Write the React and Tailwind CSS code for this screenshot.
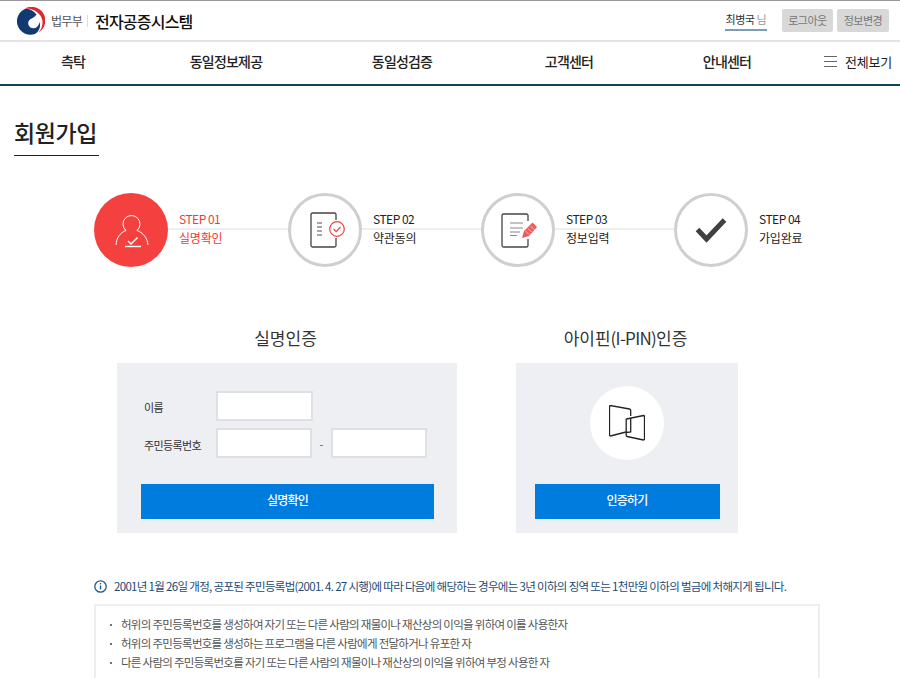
const navItems = [
  { label: '측탁', className: 'w-[146px]' },
  { label: '동일정보제공', className: 'w-[160px]' },
  { label: '동일성검증', className: 'w-[192px]' },
  { label: '고객센터', className: 'w-[142px]' },
  { label: '안내센터', className: 'w-[174px]' },
]

const steps = [
  { no: 'STEP 01', name: '실명확인', active: true, icon: <UserCheckIcon />, width: 'w-[194px]' },
  { no: 'STEP 02', name: '약관동의', icon: <AgreeIcon />, width: 'w-[193px]' },
  { no: 'STEP 03', name: '정보입력', icon: <WriteIcon />, width: 'w-[193px]' },
  { no: 'STEP 04', name: '가입완료', icon: <DoneIcon />, width: 'w-[130px]', last: true },
]

const notices = [
  '허위의 주민등록번호를 생성하여 자기 또는 다른 사람의 재물이나 재산상의 이익을 위하여 이를 사용한자',
  '허위의 주민등록번호를 생성하는 프로그램을 다른 사람에게 전달하거나 유포한 자',
  '다른 사람의 주민등록번호를 자기 또는 다른 사람의 재물이나 재산상의 이익을 위하여 부정 사용한 자',
]

function Emblem() {
  return (
    <svg width="28" height="28" viewBox="0 0 28 28" className="shrink-0">
      <circle cx="14" cy="14" r="14" fill="#fff" />
      <path d="M9 1.500A13.500 13.500 0 1 0 18 27C22.500 24 24 19 22.500 15 21.500 21 16.500 22.500 13.500 20.500 10.500 18.500 10.500 14.500 13 12.500 15 11 18 10.500 19.500 7.500 17 4 13.500 2 9 1.500Z" fill="#123a6e" />
      <path d="M7.500 1.700A13.700 13.700 0 0 1 21.500 25.500 15 15 0 0 0 25.300 13C24 6.500 16 0.800 7.500 1.700Z" fill="#e2252f" />
    </svg>
  )
}

function UserCheckIcon() {
  return (
    <svg width="40" height="40" viewBox="0 0 40 40" fill="none" stroke="#fff" strokeWidth="1">
      <path d="M15 20.500A8.500 8.500 0 1 1 26 20.500" />
      <path d="M15 20.500C9 22.500 5.500 28 5 35M26 20.500C32 22.500 36.500 28 37 35" />
      <path d="M17 31l3 3 6.500-6.500" strokeWidth="1.500" />
      <path d="M14 36.500h16" strokeWidth="1.400" />
    </svg>
  )
}

function AgreeIcon() {
  return (
    <svg width="36" height="36" viewBox="0 0 36 36" fill="none" className="overflow-visible">
      <path d="M29 8V2.500A1.500 1.500 0 0 0 27.500 1H5.500A1.500 1.500 0 0 0 4 2.500v31A1.500 1.500 0 0 0 5.500 35h22a1.500 1.500 0 0 0 1.500-1.500V26" stroke="#444" strokeWidth="1.300" />
      <path d="M10 11h5M10 15h5M10 19h5M10 23h5" stroke="#888" strokeWidth="1.300" />
      <circle cx="30" cy="17" r="7.300" fill="#fff" stroke="#f04040" strokeWidth="1.200" />
      <path d="M26.500 17l2.700 2.700 4.300-4.700" stroke="#f04040" strokeWidth="1.200" />
    </svg>
  )
}

function WriteIcon() {
  return (
    <svg width="36" height="36" viewBox="0 0 36 36" fill="none" className="overflow-visible">
      <path d="M28 9V3.500A1.500 1.500 0 0 0 26.500 2H3.500A1.500 1.500 0 0 0 2 3.500v30A1.500 1.500 0 0 0 3.500 35h23a1.500 1.500 0 0 0 1.500-1.500V27" stroke="#444" strokeWidth="1.300" />
      <path d="M10 11h13M10 16h13M10 20h10M10 23.500h7" stroke="#888" strokeWidth="1.200" />
      <path d="M22 26l2-7 8.500-8.500 4.500 4.500-8 9Z" fill="#f25a5a" />
      <path d="M25.500 19l3.500 3.500M28 16.500l3.500 3.500M30.500 14l3.500 3.500" stroke="#fff" strokeWidth="0.600" />
    </svg>
  )
}

function DoneIcon() {
  return (
    <svg width="32" height="26" viewBox="0 0 32 26" fill="none">
      <path d="M2.500 12.500l9 9.500L29.500 3" stroke="#404040" strokeWidth="5" />
    </svg>
  )
}

function PinIcon() {
  return (
    <svg width="36" height="36" viewBox="0 0 36 36" fill="none" stroke="#222" strokeWidth="1.300">
      <path d="M17 27l-15.500 4a1 1 0 0 1-1-1V1.500a1 1 0 0 1 1-1l19 3.500a1.500 1.500 0 0 1 1.200 1.500V11" />
      <path d="M17.500 14l17-3.500a1 1 0 0 1 1 1V34a1 1 0 0 1-1 1L18 31.500a1 1 0 0 1-0.800-1V15a1 1 0 0 1 0.300-1Z" />
      <path d="M21.700 13v14l-4.500 0.500" />
    </svg>
  )
}

function InfoIcon() {
  return (
    <svg width="13" height="13" viewBox="0 0 13 13" fill="none" stroke="#1d5c8c" className="shrink-0">
      <circle cx="6.500" cy="6.500" r="5.700" strokeWidth="1.300" />
      <path d="M6.500 5.500v4" strokeWidth="1.400" />
      <path d="M6.500 3v1.400" strokeWidth="1.400" />
    </svg>
  )
}

function Step({ no, name, active, icon, last, width }) {
  return (
    <div className={`flex items-center ${width}`}>
      <div className={`flex h-[74px] w-[74px] shrink-0 items-center justify-center rounded-full ${active ? 'bg-[#f54040]' : 'border-[3px] border-[#cfcfcf] bg-white'}`}>
        {icon}
      </div>
      <div className={`mb-[2px] flex min-w-0 flex-1 flex-col text-[12px] leading-[18px] ${active ? 'text-[#f03a3a]' : 'text-[#222]'}`}>
        <span className="pl-[11px] tracking-[-0.5px]">{no}</span>
        <span className={`h-[2px] ${last ? '' : 'bg-[#eeeeee]'}`} />
        <span className="-translate-y-px pl-[11px] tracking-[-0.2px]">{name}</span>
      </div>
    </div>
  )
}

export default function App() {
  return (
    <div className="h-[678px] w-[900px] overflow-hidden bg-white font-['Noto_Sans_CJK_KR','Noto_Sans',sans-serif] text-[#222]">
      <header className="flex h-[42px] items-center border-t border-b-2 border-t-[#999] border-b-[#e4e4e4] pl-[17px] pr-[11px]">
        <Emblem />
        <span className="ml-[6px] text-[12px] tracking-[-0.7px] text-[#555]">법무부</span>
        <span className="mx-[5px] h-[12px] w-px bg-[#ddd]" />
        <span className="ml-[2px] text-[16px] font-medium tracking-[-0.8px] text-[#111]">전자공증시스템</span>
        <div className="ml-auto flex items-center">
          <span className="border-b-2 border-[#7c9db8] px-[1px] pb-[1px] text-[11px] leading-[18px] tracking-[-0.5px] text-[#333]">
            최병국 <span className="text-[#999]">님</span>
          </span>
          <button className="ml-[15px] h-[23px] w-[51px] rounded-[2px] bg-[#d8d8d8] text-[11px] tracking-[-0.5px] text-[#777]">로그아웃</button>
          <button className="ml-[4px] h-[23px] w-[52px] rounded-[2px] bg-[#d8d8d8] text-[11px] tracking-[-0.5px] text-[#777]">정보변경</button>
        </div>
      </header>

      <nav className="flex h-[44px] items-center border-b-2 border-[#123f5f] pb-[3px]">
        {navItems.map((item) => (
          <a key={item.label} className={`${item.className} text-center text-[14px] font-medium tracking-[-0.8px] text-[#222]`}>
            {item.label}
          </a>
        ))}
        <div className="ml-[10px] flex items-center gap-[8px]">
          <span className="flex w-[13px] flex-col gap-[4px]">
            <span className="h-px bg-[#666]" />
            <span className="h-px bg-[#666]" />
            <span className="h-px bg-[#666]" />
          </span>
          <span className="text-[13px] tracking-[-0.2px] text-[#222]">전체보기</span>
        </div>
      </nav>

      <main>
        <div className="px-[14px] pt-[28px]">
          <h1 className="w-[85px] border-b border-[#222] pb-[5px] text-[23px] leading-[36px] font-medium tracking-[-0.4px] whitespace-nowrap text-[#222]">회원가입</h1>
        </div>

        <div className="mt-[37px] flex pl-[94px]">
          {steps.map((step) => (
            <Step key={step.no} {...step} />
          ))}
        </div>

        <div className="mt-[56px] flex pl-[117px]">
          <section className="w-[340px]">
            <h2 className="pr-[3px] text-center text-[17px] leading-[30px] text-[#333]">실명인증</h2>
            <div className="mt-[10px] h-[170px] bg-[#eeeff3] px-[24px] pt-[28px]">
              <div className="flex items-center">
                <label className="w-[75px] pt-[2px] pl-[3px] text-[11px] tracking-[-0.5px] text-[#333]">이름</label>
                <input className="h-[30px] w-[97px] border-2 border-[#e0e0e2] bg-white" />
              </div>
              <div className="mt-[7px] flex items-center">
                <label className="w-[75px] pt-[4px] pl-[3px] text-[11px] tracking-[-0.6px] text-[#333]">주민등록번호</label>
                <input className="h-[30px] w-[96px] border-2 border-[#e0e0e2] bg-white" />
                <span className="w-[19px] pt-[3px] text-center text-[11px] text-[#555]">-</span>
                <input className="h-[30px] w-[96px] border-2 border-[#e0e0e2] bg-white" />
              </div>
              <button className="mt-[26px] h-[35px] w-[293px] bg-[#007cdf] pb-[3px] text-[12px] font-medium tracking-[-0.8px] text-white">실명확인</button>
            </div>
          </section>

          <section className="ml-[59px] w-[222px]">
            <h2 className="pr-[3px] text-center text-[17px] leading-[30px] text-[#333]">
              아이핀<span className="tracking-[-0.7px]">(I-PIN)</span>인증
            </h2>
            <div className="mt-[10px] flex h-[170px] flex-col items-center bg-[#eeeff3] pt-[23px]">
              <div className="flex h-[74px] w-[74px] items-center justify-center rounded-full bg-white">
                <PinIcon />
              </div>
              <button className="mt-[24px] h-[35px] w-[185px] bg-[#007cdf] pb-[3px] text-[12px] font-medium tracking-[-0.8px] text-white">인증하기</button>
            </div>
          </section>
        </div>

        <div className="mt-[44px] ml-[94px] flex w-[726px] items-center gap-[7px]">
          <InfoIcon />
          <p className="text-[11.5px] leading-[18px] tracking-[-0.68px] whitespace-nowrap text-[#1c4a73]">
            2001년 1월 26일 개정, 공포된 주민등록법(2001. 4. 27 시행)에 따라 다음에 해당하는 경우에는 3년 이하의 징역 또는 1천만원 이하의 벌금에 처해지게 됩니다.
          </p>
        </div>

        <ul className="mt-[9px] ml-[94px] w-[726px] border-2 border-[#eeeeee] px-[14px] pt-[9px] pb-[10px] text-[11.5px] leading-[19px] tracking-[-0.72px] text-[#555]">
          {notices.map((text) => (
            <li key={text} className="flex items-center gap-[9px]">
              <span className="h-[2px] w-[2px] shrink-0 rounded-full bg-[#444]" />
              <span>{text}</span>
            </li>
          ))}
        </ul>
      </main>
    </div>
  )
}
